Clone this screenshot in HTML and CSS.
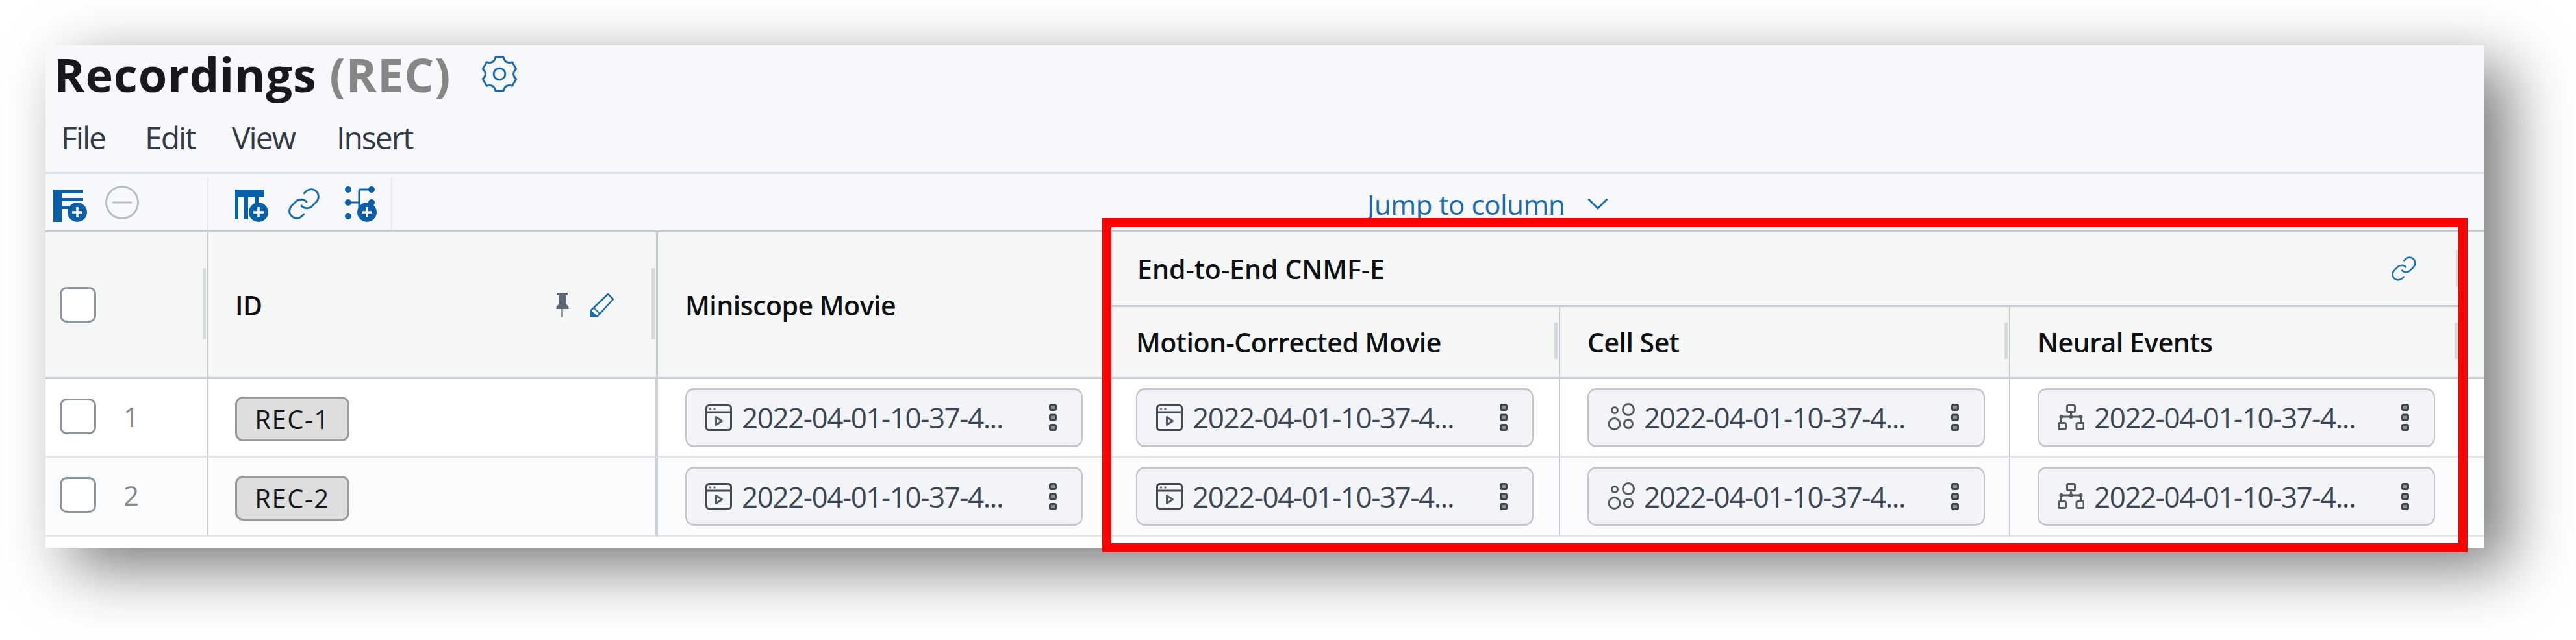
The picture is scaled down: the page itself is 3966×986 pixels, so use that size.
FILE: index.html
```html
<!DOCTYPE html>
<html lang="en">
<head>
<meta charset="utf-8">
<title>Recordings (REC)</title>
<link rel="stylesheet" href="styles.css">
</head>
<body>
<svg class="defs" aria-hidden="true">
  <symbol id="i-link" viewBox="0 0 24 24"><path d="M10 13a5 5 0 0 0 7.54.54l3-3a5 5 0 0 0-7.07-7.07l-1.72 1.71"/><path d="M14 11a5 5 0 0 0-7.54-.54l-3 3a5 5 0 0 0 7.07 7.07l1.71-1.71"/></symbol>
  <symbol id="i-movie" viewBox="0 0 41 41"><rect x="1.5" y="1.5" width="38" height="38" rx="4" fill="none" stroke="#454a52" stroke-width="3"/><path d="M2 12h37" stroke="#454a52" stroke-width="3"/><circle cx="7.5" cy="7" r="1.8" fill="#6a6f77"/><circle cx="14" cy="7" r="1.8" fill="#6a6f77"/><path d="M16.5 19.5v12l9-6z" fill="none" stroke="#555a62" stroke-width="3" stroke-linejoin="round"/></symbol>
  <symbol id="i-cells" viewBox="0 0 44 44" fill="none" stroke="#54585f" stroke-width="3"><circle cx="32" cy="10" r="8.5"/><circle cx="11" cy="11" r="4.5"/><circle cx="10.5" cy="32" r="8.5"/><circle cx="32" cy="32" r="6.5"/></symbol>
  <symbol id="i-tree" viewBox="0 0 41 41" fill="none" stroke="#54585f" stroke-width="3"><rect x="14.5" y="1.5" width="12" height="10" rx="2"/><path d="M20.5 11v8M4 19h33M5.5 19v9M35.5 19v9"/><rect x="1.5" y="28.5" width="11" height="10" rx="2"/><rect x="29" y="28.5" width="11" height="10" rx="2"/><circle cx="5.5" cy="19" r="3" fill="#54585f" stroke="none"/><circle cx="20.5" cy="19" r="3" fill="#54585f" stroke="none"/><circle cx="35.5" cy="19" r="3" fill="#54585f" stroke="none"/></symbol>
  <symbol id="i-more" viewBox="0 0 12 42" fill="#8f939a" stroke="#3f444b" stroke-width="3"><rect x="1.5" y="1.5" width="9" height="8" rx="2"/><rect x="1.5" y="17" width="9" height="8" rx="2"/><rect x="1.5" y="32.5" width="9" height="8" rx="2"/></symbol>
</svg>

<main class="window">
  <header class="title-row">
    <h1 class="title">Recordings <span class="title-key">(REC)</span></h1>
    <svg class="gear" viewBox="0 0 24 24" aria-hidden="true"><path d="M9.4.9h5.2Q15.75 5.5 20.4 4.2L23 8.6Q19.5 12 23 15.4L20.4 19.8Q15.75 18.5 14.6 23.1H9.4Q8.25 18.5 3.6 19.8L1 15.4Q4.5 12 1 8.6L3.6 4.2Q8.25 5.5 9.4.9Z"/><circle cx="12" cy="12" r="3.8"/></svg>
  </header>
  <nav class="menu">
    <span class="menu-item menu-file">File</span>
    <span class="menu-item menu-edit">Edit</span>
    <span class="menu-item menu-view">View</span>
    <span class="menu-item">Insert</span>
  </nav>
  <div class="toolbar">
    <div class="tool-group tool-group-rows">
      <svg class="tool tool-52" viewBox="0 0 52 56"><g class="tool-fill"><rect x="0" y="6" width="14" height="50"/><rect x="14" y="7" width="32" height="5"/><rect x="14" y="19" width="32" height="5"/><rect x="14" y="31" width="10" height="5"/></g><circle class="tool-fill" cx="37" cy="41" r="15"/><path class="tool-plus" d="M37 33v16M29 41h16"/></svg>
      <svg class="tool tool-52 tool-minus" viewBox="0 0 52 56"><circle cx="26" cy="26" r="24.5"/><path d="M11 26h30"/></svg>
    </div>
    <div class="tool-group tool-group-cols">
      <svg class="tool tool-52" viewBox="0 0 52 56"><g class="tool-fill"><rect x="0" y="6" width="45" height="12"/><rect x="0" y="18" width="5" height="34"/><rect x="14" y="18" width="6" height="34"/><rect x="30" y="18" width="6" height="12"/></g><circle class="tool-fill" cx="36" cy="41" r="15"/><path class="tool-plus" d="M36 33v16M28 41h16"/></svg>
      <svg class="tool tool-link" viewBox="0 0 24 24"><use href="#i-link"/></svg>
      <svg class="tool tool-50" viewBox="0 0 50 56"><g class="tool-fill"><circle cx="5" cy="6" r="5"/><circle cx="5" cy="26" r="5"/><circle cx="5" cy="47" r="5"/><circle cx="41" cy="6" r="5"/><circle cx="41" cy="26" r="5"/></g><path d="M5 26h18M22 42V8q0-2 2-2h17" fill="none" stroke="#0b5fa8" stroke-width="3"/><circle class="tool-fill" cx="34" cy="41" r="15"/><path class="tool-plus" d="M34 33v16M26 41h16"/></svg>
    </div>
    <div class="jump">
      <span>Jump to column</span>
      <svg class="chevron" viewBox="0 0 32 18"><path d="M1.5 1.5 16 16 30.5 1.5"/></svg>
    </div>
  </div>

  <div class="table">
    <div class="cell head head-tall col-select resize"><span class="check"></span></div>
    <div class="cell head head-tall col-id resize">
      <span class="label">ID</span>
      <span class="head-icons">
        <svg class="pin" viewBox="0 0 25 38"><path d="M4 0h17v4h-2.500v13l4 5v3H3.500v-3l4-5V4H4z" fill="#5d6673"/><path d="M12.500 25v13" stroke="#8e959f" stroke-width="3"/></svg>
        <svg class="pencil" viewBox="0 0 39 38"><path d="M29 2 37 10 13 36H3V27z" fill="none" stroke="#1b6db0" stroke-width="2.500" stroke-linejoin="round"/><path d="M3 27 13 36H3z" fill="#1b6db0"/><path d="M7 23 16 32" stroke="#1b6db0" stroke-width="2"/></svg>
      </span>
    </div>
    <div class="cell head head-tall"><span class="label">Miniscope Movie</span></div>
    <div class="cell head group">
      <span class="label label-group">End-to-End CNMF-E</span>
      <svg class="group-link" viewBox="0 0 24 24"><use href="#i-link"/></svg>
    </div>
    <div class="cell head head-tall head-last"></div>
    <div class="cell head sub resize-sub"><span class="label">Motion-Corrected Movie</span></div>
    <div class="cell head sub resize-sub"><span class="label">Cell Set</span></div>
    <div class="cell head sub resize-sub"><span class="label">Neural Events</span></div>

    <div class="cell row-a col-select"><span class="check"></span><span class="num">1</span></div>
    <div class="cell row-a col-id"><span class="pill">REC-1</span></div>
    <div class="cell row-a"><div class="card"><svg class="card-icon" viewBox="0 0 41 41"><use href="#i-movie"/></svg><span class="card-text">2022-04-01-10-37-4...</span><svg class="more" viewBox="0 0 12 42"><use href="#i-more"/></svg></div></div>
    <div class="cell row-a"><div class="card"><svg class="card-icon" viewBox="0 0 41 41"><use href="#i-movie"/></svg><span class="card-text">2022-04-01-10-37-4...</span><svg class="more" viewBox="0 0 12 42"><use href="#i-more"/></svg></div></div>
    <div class="cell row-a"><div class="card"><svg class="card-icon card-icon-wide" viewBox="0 0 44 44"><use href="#i-cells"/></svg><span class="card-text">2022-04-01-10-37-4...</span><svg class="more" viewBox="0 0 12 42"><use href="#i-more"/></svg></div></div>
    <div class="cell row-a"><div class="card"><svg class="card-icon" viewBox="0 0 41 41"><use href="#i-tree"/></svg><span class="card-text">2022-04-01-10-37-4...</span><svg class="more" viewBox="0 0 12 42"><use href="#i-more"/></svg></div></div>
    <div class="cell row-a cell-last"></div>

    <div class="cell row-b col-select"><span class="check"></span><span class="num">2</span></div>
    <div class="cell row-b col-id"><span class="pill">REC-2</span></div>
    <div class="cell row-b"><div class="card"><svg class="card-icon" viewBox="0 0 41 41"><use href="#i-movie"/></svg><span class="card-text">2022-04-01-10-37-4...</span><svg class="more" viewBox="0 0 12 42"><use href="#i-more"/></svg></div></div>
    <div class="cell row-b"><div class="card"><svg class="card-icon" viewBox="0 0 41 41"><use href="#i-movie"/></svg><span class="card-text">2022-04-01-10-37-4...</span><svg class="more" viewBox="0 0 12 42"><use href="#i-more"/></svg></div></div>
    <div class="cell row-b"><div class="card"><svg class="card-icon card-icon-wide" viewBox="0 0 44 44"><use href="#i-cells"/></svg><span class="card-text">2022-04-01-10-37-4...</span><svg class="more" viewBox="0 0 12 42"><use href="#i-more"/></svg></div></div>
    <div class="cell row-b"><div class="card"><svg class="card-icon" viewBox="0 0 41 41"><use href="#i-tree"/></svg><span class="card-text">2022-04-01-10-37-4...</span><svg class="more" viewBox="0 0 12 42"><use href="#i-more"/></svg></div></div>
    <div class="cell row-b cell-last"></div>
  </div>

  <div class="highlight"></div>
</main>
</body>
</html>
```

FILE: styles.css
```css
* { box-sizing: border-box; }

html, body { margin: 0; background: #fff; }

body {
  width: 3966px;
  height: 986px;
  padding: 70px 142px 142px 70px;
  overflow: hidden;
  font-family: "Open Sans", "Liberation Sans", sans-serif;
}

.defs { display: none; }

.window {
  position: relative;
  width: 3754px;
  height: 774px;
  background: #fff;
  box-shadow: 38px 31px 90px rgba(0, 0, 0, 0.52);
}

.title-row {
  display: flex;
  align-items: center;
  height: 88px;
  padding-left: 13px;
  background: #f7f8fc;
}

.title {
  margin: 0;
  font-size: 72px;
  line-height: 88px;
  font-weight: 700;
  color: #17191c;
  letter-spacing: 0.9px;
}

.title-key { color: #868686; }

.gear {
  width: 56px;
  height: 56px;
  margin-left: 47px;
  fill: none;
  stroke: #1a6cad;
  stroke-width: 1.3;
  stroke-linejoin: round;
}

.menu {
  display: flex;
  align-items: center;
  height: 110px;
  padding-left: 24px;
  background: #f7f8fc;
  border-bottom: 3px solid #d6dce4;
  font-size: 48px;
  letter-spacing: -2px;
  color: #333a46;
}

.menu-file { width: 129px; }
.menu-edit { width: 134px; }
.menu-view { width: 161px; }

.toolbar {
  display: flex;
  align-items: center;
  height: 90px;
  padding-top: 5px;
  background: #f7f8fc;
  border-bottom: 3px solid #c6ccd1;
}

.tool-group {
  display: flex;
  height: 82px;
  align-items: center;
  border-right: 2px solid #e6e8ec;
}

.tool-group-rows { width: 251px; padding-left: 12px; gap: 28px; }
.tool-group-cols { width: 283px; padding-left: 41px; }

.tool { height: 56px; flex: none; }
.tool-52 { width: 52px; }
.tool-50 { width: 50px; margin-left: 36px; }
.tool-link {
  width: 54px;
  height: 54px;
  margin-left: 27px;
  fill: none;
  stroke: #1a6cad;
  stroke-width: 1.3;
}

.tool-fill { fill: #0b5fa8; }
.tool-plus { fill: none; stroke: #fff; stroke-width: 3.5; }
.tool-minus { fill: none; stroke: #b9bec8; stroke-width: 3; }

.jump {
  display: flex;
  align-items: center;
  gap: 35px;
  margin-left: 1501px;
  font-size: 42px;
  letter-spacing: -0.4px;
  color: #1a6cad;
}

.chevron {
  width: 32px;
  height: 18px;
  fill: none;
  stroke: #1a6cad;
  stroke-width: 3;
}

.table {
  display: grid;
  grid-template-columns: 251px 692px 694px 695px 693px 693px 36px;
  grid-template-rows: 115px 111px 121px 122px;
}

.cell {
  position: relative;
  display: flex;
  align-items: center;
  min-width: 0;
  border-right: 2px solid #c3c9ce;
  border-bottom: 3px solid #c6ccd1;
}

.head { background: #f5f7f7; padding-left: 42px; }
.head-tall { grid-row: span 2; }
.group { grid-column: span 3; padding-left: 44px; padding-right: 64px; justify-content: space-between; }
.group::after {
  content: "";
  position: absolute;
  top: 27px;
  right: 0;
  width: 5px;
  height: 57px;
  background: #d7dbde;
}

.label {
  font-size: 41px;
  font-weight: 600;
  color: #0e1114;
  letter-spacing: -0.5px;
}

.label-group { letter-spacing: 0; }

.col-select { padding-left: 22px; }
.col-id { padding-left: 41px; justify-content: space-between; }
.head.col-id { padding-right: 64px; border-right-width: 3px; }
.row-a.col-id, .row-b.col-id { border-right: 4px solid #c8d0d5; }

.resize::after,
.resize-sub::after {
  content: "";
  position: absolute;
  right: 2px;
  width: 5px;
  background: #d7dbde;
}

.resize::after { top: 55px; height: 110px; }
.resize-sub::after { top: 24px; height: 56px; }

.head-icons { display: flex; align-items: center; gap: 29px; }
.pin { width: 25px; height: 38px; }
.pencil { width: 39px; height: 38px; }

.group-link {
  width: 42px;
  height: 42px;
  fill: none;
  stroke: #1a74b8;
  stroke-width: 1.5;
}

.check {
  display: block;
  flex: none;
  width: 56px;
  height: 55px;
  background: #fff;
  border: 3px solid #8c959b;
  border-radius: 11px;
}

.row-a, .row-b { padding-left: 42px; }
.row-a { background: #fff; border-bottom-color: #e3e5e8; }
.row-b { background: #fbfcfe; border-bottom-color: #e3e5e8; }
.row-a.col-select, .row-b.col-select { padding-left: 22px; padding-bottom: 4px; }
.row-a.col-id, .row-b.col-id { padding-left: 41px; }
.head.head-last, .row-a.cell-last, .row-b.cell-last { padding-left: 0; border-right: 0; }

.num {
  margin-left: 42px;
  font-size: 42px;
  color: #8a8a8a;
  letter-spacing: -1px;
}

.pill {
  display: block;
  width: 176px;
  height: 69px;
  margin-top: 5px;
  line-height: 63px;
  text-align: center;
  background: #dedede;
  border: 3px solid #9b9b9b;
  border-radius: 12px;
  font-size: 40px;
  letter-spacing: 1.500px;
  color: #14171b;
}

.card {
  display: flex;
  align-items: center;
  width: 612px;
  height: 91px;
  padding: 0 38px 0 29px;
  background: #f3f4f8;
  border: 2px solid #c2c5ca;
  border-top-width: 3px;
  border-bottom-width: 3px;
  border-radius: 14px;
}

.card-icon { width: 41px; height: 41px; flex: none; }
.card-icon-wide { width: 44px; height: 44px; margin-right: -3px; }

.card-text {
  margin-left: 15px;
  font-size: 44px;
  letter-spacing: -1.45px;
  color: #3c4655;
  white-space: nowrap;
}

.more { width: 12px; height: 42px; margin-left: auto; flex: none; }

.highlight {
  position: absolute;
  left: 1627px;
  top: 266px;
  width: 2102px;
  height: 515px;
  border: 14px solid #f00;
}
```
